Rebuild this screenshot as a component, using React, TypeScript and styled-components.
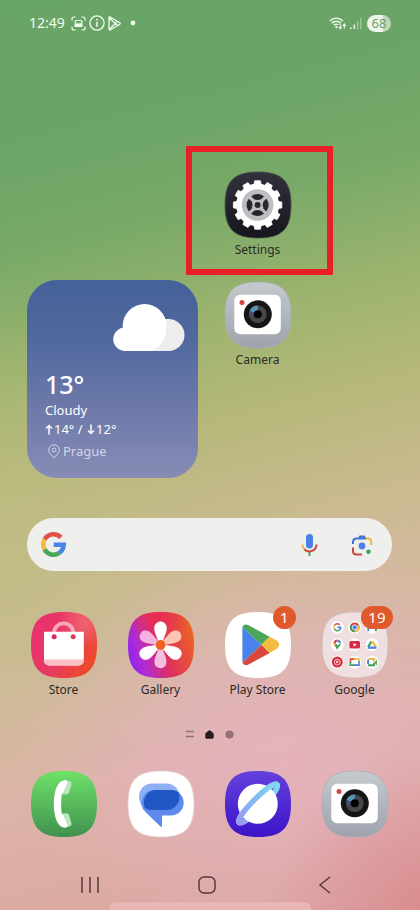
import React from "react";
import styled, { createGlobalStyle } from "styled-components";

const GlobalStyle = createGlobalStyle`
  *, *::before, *::after { box-sizing: border-box; }
  body { margin: 0; font-family: "Noto Sans", Roboto, sans-serif; }
  button, input { font: inherit; color: inherit; background: none; border: 0; padding: 0; margin: 0; }
  button { cursor: pointer; }
  svg { display: block; overflow: visible; }
`;

const Screen = styled.div`
  display: flex;
  flex-direction: column;
  min-height: 100vh;
  overflow: hidden;
  background:
    radial-gradient(ellipse 45% 20% at 108% 102%, rgba(216, 118, 128, 0.65), rgba(216, 118, 128, 0) 100%),
    radial-gradient(ellipse 65% 24% at 68% 84%, rgba(232, 178, 196, 0.75), rgba(232, 178, 196, 0) 100%),
    radial-gradient(ellipse 55% 26% at 0% 62%, rgba(190, 190, 130, 0.65), rgba(190, 190, 130, 0) 100%),
    linear-gradient(166deg, #68a466 0%, #6aa567 14%, #78a968 25%, #9ab36e 36%, #b7b87a 47%, #cbba92 59%, #d7b8a4 70%, #ddb3a8 80%, #d9a39a 100%);
`;

const StatusBar = styled.header`
  display: flex;
  align-items: center;
  justify-content: space-between;
  height: 46px;
  padding: 0 29px;
  color: #f2fbf0;
`;

const StatusGroup = styled.div<{ $gap: number }>`
  display: flex;
  align-items: center;
  gap: ${(p) => p.$gap}px;
`;

const Clock = styled.time`
  font-size: 14px;
  line-height: 20px;
  margin-right: 3px;
`;

const Battery = styled.span`
  display: flex;
  align-items: center;
  justify-content: center;
  width: 24px;
  height: 17px;
  margin-left: 2px;
  border-radius: 9px;
  background: linear-gradient(90deg, #edf6ea 68%, #bcd8b9 68%);
  color: #6ea06b;
  font-size: 13px;
  line-height: 16px;
`;

const Home = styled.main`
  display: flex;
  flex-direction: column;
  flex: 1;
  padding-top: 126px;
`;

const AppGrid = styled.section`
  display: grid;
  grid-template-columns: repeat(4, 1fr);
  grid-auto-rows: 110px;
  padding: 0 17px 0 15px;
`;

const AppRow = styled.section<{ $top: number }>`
  display: grid;
  grid-template-columns: repeat(4, 1fr);
  margin-top: ${(p) => p.$top}px;
  padding: 0 17px 0 15px;
`;

const AppCell = styled.div<{ $column?: number }>`
  position: relative;
  display: flex;
  flex-direction: column;
  align-items: center;
  align-self: start;
  ${(p) => p.$column && `grid-column: ${p.$column};`}
`;

const AppButton = styled.button`
  display: flex;
  flex-direction: column;
  align-items: center;
  gap: 4px;
`;

const IconFrame = styled.span`
  position: relative;
  display: block;
  width: 66px;
  height: 66px;
`;

const AppLabel = styled.span`
  font-size: 12px;
  line-height: 16px;
  color: #2b2a27;
  white-space: nowrap;
`;

const Badge = styled.span`
  position: absolute;
  top: -6px;
  right: -5px;
  min-width: 22px;
  height: 23px;
  padding: 0 7px;
  border-radius: 12px;
  background: #e0592b;
  color: #fff;
  font-size: 15px;
  line-height: 22px;
  text-align: center;
`;

const Highlight = styled.span`
  position: absolute;
  top: -26px;
  left: -23px;
  right: -27px;
  height: 129px;
  border: 6px solid #e81f25;
  pointer-events: none;
`;

const Weather = styled.section`
  grid-column: 1 / span 2;
  grid-row: 2 / span 2;
  align-self: start;
  display: flex;
  flex-direction: column;
  height: 198px;
  margin: -2px 11px 0 12px;
  padding: 24px 13px 0 18px;
  border-radius: 30px;
  background: linear-gradient(180deg, #456199 0%, #51699e 30%, #6b78a9 62%, #878cb5 100%);
  color: #fff;
  font-size: 13px;
  line-height: 19px;

  > svg { align-self: flex-end; }
`;

const Temperature = styled.strong`
  margin-top: 15px;
  font-size: 25px;
  font-weight: 500;
  line-height: 34px;
`;

const Line = styled.span<{ $muted?: boolean }>`
  display: flex;
  align-items: center;
  ${(p) => p.$muted && `
    gap: 3px;
    margin-top: 3px;
    padding-left: 3px;
    color: #d3d5e7;
  `}
`;

const Forecast = styled(Line)`
  gap: 1px;
  white-space: pre;
`;

const SearchBar = styled.form`
  display: flex;
  align-items: center;
  height: 53px;
  margin: 16px 28px 0 27px;
  padding: 0 19px 0 14px;
  border-radius: 27px;
  background: #eff0ee;
`;

const SearchInput = styled.input`
  flex: 1;
  min-width: 0;
  padding: 0 12px;
  font-size: 15px;
  outline: none;
`;

const SearchActions = styled.div`
  display: flex;
  align-items: center;
  gap: 33px;
`;

const Pager = styled.nav`
  display: flex;
  align-items: center;
  justify-content: center;
  gap: 11px;
  height: 20px;
  margin-top: 26px;
`;

const NavBar = styled.nav`
  display: grid;
  grid-template-columns: repeat(3, 1fr);
  align-items: center;
  justify-items: center;
  height: 34px;
  padding: 0 36px 0 31px;
  margin-top: 29px;
`;

const Sheet = styled.div`
  width: 48%;
  height: 8px;
  margin: 0 auto;
  border-radius: 6px 6px 0 0;
  background: #e8b6b6;
  box-shadow: 0 0 1px #c58f93;
`;

const SQUIRCLE = "M33 0C57 0 66 9 66 33S57 66 33 66 0 57 0 33 9 0 33 0Z";

function Tile({ fill, stroke = "none", children }: { fill: string; stroke?: string; children?: React.ReactNode }) {
  return (
    <svg width="66" height="66" viewBox="0 0 66 66" aria-hidden="true">
      <path d={SQUIRCLE} fill={fill} stroke={stroke} strokeWidth="0.8" />
      {children}
    </svg>
  );
}

function Vertical({ id, from, to }: { id: string; from: string; to: string }) {
  return (
    <defs>
      <linearGradient id={id} x1="0" y1="0" x2="0" y2="1">
        <stop stopColor={from} />
        <stop offset="1" stopColor={to} />
      </linearGradient>
    </defs>
  );
}

function SettingsIcon() {
  return (
    <Tile fill="url(#settings-bg)" stroke="#4a5147">
      <Vertical id="settings-bg" from="#32323e" to="#15161d" />
      <g transform="translate(32.6 33)">
        <circle r="21.5" fill="#fff" />
        {Array.from({ length: 12 }, (_, i) => (
          <path key={i} d="M-3.6-20L-2.9-24.2H2.9L3.6-20Z" fill="#fff" stroke="#fff" strokeWidth="0.8" strokeLinejoin="round" transform={`rotate(${i * 30})`} />
        ))}
        <circle r="15.8" fill="#bdbdc2" />
        {[0, 90, 180, 270].map((angle) => (
          <path key={angle} d="M-6.3-8.8Q0-13.4 6.3-8.8Q6-8 3.4-5.8Q0-4.4-3.4-5.8Q-6-8-6.3-8.8Z" fill="#25262f" transform={`rotate(${angle})`} />
        ))}
        <circle r="3" fill="#25262f" />
      </g>
    </Tile>
  );
}

function CameraIcon() {
  return (
    <Tile fill="url(#camera-bg)" stroke="#a9b0b3">
      <Vertical id="camera-bg" from="#c5cacd" to="#9da2ad" />
      <rect x="9.3" y="12.8" width="46.5" height="39.5" rx="6" fill="#fff" />
      <circle cx="17" cy="20.4" r="2.5" fill="#d8433f" />
      <circle cx="32.8" cy="32.3" r="14" fill="#151516" />
      <circle cx="32.8" cy="32.3" r="8.8" fill="#48484c" />
      <path d="M32.8 32.3V23.5A8.8 8.8 0 0 0 24.6 29Z" fill="#5797b4" />
      <path d="M32.8 32.3L24.6 29A8.8 8.8 0 0 0 24.2 34Z" fill="#4b4a78" />
      <circle cx="32.8" cy="32.3" r="4" fill="#020203" />
    </Tile>
  );
}

function StoreIcon() {
  return (
    <Tile fill="url(#store-bg)">
      <defs>
        <linearGradient id="store-bg" x1="0" y1="0.25" x2="1" y2="0.8">
          <stop stopColor="#e9306f" />
          <stop offset="0.5" stopColor="#e63c60" />
          <stop offset="1" stopColor="#ee4b22" />
        </linearGradient>
        <radialGradient id="store-glow" cx="0.82" cy="0.15" r="0.4">
          <stop stopColor="#f27078" stopOpacity="0.8" />
          <stop offset="1" stopColor="#f27078" stopOpacity="0" />
        </radialGradient>
      </defs>
      <path d={SQUIRCLE} fill="url(#store-glow)" />
      <path d="M23 21A9.7 9.7 0 0 1 42.4 21" fill="none" stroke="#fba5bb" strokeWidth="3.8" />
      <path d="M13 19.8H52.8V48Q52.8 53.4 47.4 53.4H18.4Q13 53.4 13 48Z" fill="#fff" />
      <path d="M13 47.4H52.8V48Q52.8 53.4 47.4 53.4H18.4Q13 53.4 13 48Z" fill="#fac0c4" />
      <circle cx="23.2" cy="24.8" r="2.5" fill="#d72b61" />
      <circle cx="42.2" cy="24.8" r="2.5" fill="#df3b56" />
    </Tile>
  );
}

function GalleryIcon() {
  return (
    <Tile fill="url(#gallery-bg)">
      <defs>
        <linearGradient id="gallery-bg" x1="0" y1="0.65" x2="1" y2="0.35">
          <stop stopColor="#9024f0" />
          <stop offset="0.2" stopColor="#b52ccb" />
          <stop offset="0.5" stopColor="#dd2e62" />
          <stop offset="1" stopColor="#ec6423" />
        </linearGradient>
        <radialGradient id="gallery-top" cx="0.45" cy="0" r="0.5">
          <stop stopColor="#ea2d50" />
          <stop offset="1" stopColor="#ea2d50" stopOpacity="0" />
        </radialGradient>
      </defs>
      <path d={SQUIRCLE} fill="url(#gallery-top)" />
      <g transform="translate(32.5 33)">
        {[60, 180, 300, 0, 120, 240].map((angle, i) => (
          <path
            key={angle}
            d="M-2.2-3.8C-3-8-6-12-6-17.2A6 6 0 0 1 6-17.2C6-12 3-8 2.2-3.8L0 0Z"
            fill={i > 2 ? "#fff" : ["#fcc4b4", "#f3bfe0", "#f5b3e0"][i]}
            stroke={i > 2 ? "#fff" : "none"}
            strokeWidth="0.6"
            transform={`rotate(${angle})`}
          />
        ))}
        <circle r="4.9" fill="#ed6420" />
      </g>
    </Tile>
  );
}

function PlayIcon() {
  return (
    <Tile fill="#fff">
      <path d="M17.4 15V50.5L36.5 32.8Z" fill="#4a82ec" />
      <path d="M17.4 15Q18.8 11.7 23 12.9L44.7 24.7L36.5 32.8 17.4 15Z" fill="#4ba657" />
      <path d="M17.4 50.5Q18.8 54.2 23 52.7L44.7 41L36.5 32.8Z" fill="#d9483d" />
      <path d="M44.7 24.7L52 28.8Q56.3 32.8 52 36.8L44.7 41 36.5 32.8Z" fill="#f2bd42" />
    </Tile>
  );
}

function GoogleMark({ size }: { size: number }) {
  return (
    <svg width={size} height={size} viewBox="0 0 24 24" aria-hidden="true">
      <g fill="none" strokeWidth="4.4">
        <path d="M19.2 5.2A9.8 9.8 0 0 0 3.5 7.1" stroke="#df5247" />
        <path d="M3.5 7.1A9.8 9.8 0 0 0 3.4 16.7" stroke="#f2b83c" />
        <path d="M3.4 16.7A9.8 9.8 0 0 0 17.6 20" stroke="#47a75a" />
        <path d="M17.6 20A9.8 9.8 0 0 0 21.8 12.2H12.2" stroke="#4a84e8" />
      </g>
    </svg>
  );
}

function FolderIcon() {
  const spots = [15.3, 32.7, 50.1];
  return (
    <Tile fill="#efdfe1" stroke="#cbb6b6">
      {spots.map((y) => spots.map((x) => <circle key={`${x}-${y}`} cx={x} cy={y} r="6.4" fill="#fff" />))}
      <g transform="translate(11.1 11.1) scale(0.35)">
        <GoogleMark size={24} />
      </g>
      <g transform="translate(32.7 15.3)">
        <circle r="4.9" fill="#dc4538" />
        <path d="M0 0L-4.3-2.3A4.9 4.9 0 0 0 .2 4.9Z" fill="#3f9d56" />
        <path d="M0 0L.2 4.9A4.9 4.9 0 0 0 4.3-2.3Z" fill="#f0bb3c" />
        <circle r="2.5" fill="#4a83e8" stroke="#fff" strokeWidth="0.8" />
      </g>
      <g transform="translate(50.1 15.3)" fill="none" strokeWidth="1.9">
        <path d="M-3.8 3.9V-2.8" stroke="#4a83e8" />
        <path d="M-4-2.8L0 .6L4-2.8" stroke="#dc4538" />
        <path d="M3.8 3.9V-2.8" stroke="#3f9d56" />
      </g>
      <g transform="translate(32.7 32.7)">
        <rect x="-5.4" y="-3.8" width="10.8" height="7.6" rx="1.8" fill="#dc2740" />
        <path d="M-1.2-1.8L2 0-1.2 1.8Z" fill="#fff" />
      </g>
      <g transform="translate(15.3 32.7)">
        <path d="M0 5.2C-.5 2.5-3.6 1.5-3.6-1.6L0-1.6Z" fill="#3f9d56" />
        <path d="M0 5.2C.5 2.5 3.6 1.5 3.6-1.6L-1.5 2.4Z" fill="#3f9d56" />
        <path d="M-3.6-1.6A3.6 3.6 0 0 1 0-5.2L0-1.6-2.8.8Z" fill="#dc4538" />
        <path d="M0-5.2A3.6 3.6 0 0 1 3.6-1.6L0-1.6Z" fill="#4a83e8" />
        <path d="M-3.5-1.2L-2.4 1.4 0-1.6Z" fill="#f0bb3c" />
        <circle cy="-1.6" r="1.4" fill="#fff" />
      </g>
      <g transform="translate(50.1 32.7)" fill="none" strokeWidth="2.3">
        <path d="M-.8-3.2L-4 2.6" stroke="#3f9d56" />
        <path d="M.2-3.4L3.8 2.4" stroke="#f0bb3c" />
        <path d="M-4 3H4.4" stroke="#4a83e8" />
      </g>
      <g transform="translate(15.3 50.1)">
        <circle r="5.5" fill="#d92b3f" />
        <circle r="2.9" fill="none" stroke="#fff" strokeWidth="0.7" />
        <path d="M-.9-1.5L1.7 0-.9 1.5Z" fill="#fff" />
      </g>
      <g transform="translate(32.7 50.1)" fill="none" strokeWidth="1.6">
        <path d="M-4.3 1V-3H1" stroke="#dc4538" />
        <path d="M-1-3H4.3V0" stroke="#f0bb3c" />
        <path d="M4.3-1V3H-1" stroke="#4a83e8" />
        <path d="M0 3H-4.3V0" stroke="#3f9d56" />
      </g>
      <g transform="translate(50.1 50.1)" fill="none" strokeWidth="2">
        <path d="M-4 2V-2.6" stroke="#4a83e8" />
        <path d="M-3.6-3H2V-.6" stroke="#f0bb3c" />
        <path d="M-4 3.2H2V.6" stroke="#3f9d56" />
        <path d="M2.4 .4L4.8-2.8V3.4Z" fill="#3f9d56" stroke="none" />
      </g>
    </Tile>
  );
}

function PhoneIcon() {
  return (
    <Tile fill="url(#phone-bg)">
      <Vertical id="phone-bg" from="#6fe168" to="#3f914f" />
      <path d="M33 9.2L39 10.3Q41 11 40.4 13.4L38 21.6Q37.4 23.6 35 23.4L30 23Z" fill="#bce6bd" />
      <path d="M33 56.4L39 55.3Q41 54.6 40.4 52.2L38 44Q37.4 42 35 42.2L30 42.8Z" fill="#bce6bd" />
      <path d="M34 9.2C27 9.2 22.8 19 22.8 33S27 56.6 34 56.6Q37.5 56.6 36.2 53.5L32.4 44.5Q31.8 42.6 30.8 42.8C30 38.5 30 27.5 30.8 23Q31.8 23.2 32.4 21L36.2 12.3Q37.5 9.2 34 9.2Z" fill="#fff" />
    </Tile>
  );
}

function MessagesIcon() {
  return (
    <Tile fill="#fff" stroke="#e5ccd2">
      <defs>
        <clipPath id="back-bubble">
          <rect x="11" y="12.5" width="40.5" height="26.5" rx="13" />
        </clipPath>
      </defs>
      <rect x="11" y="12.5" width="40.5" height="26.5" rx="13" fill="#8eaff3" />
      <path d="M27 19H43A12.7 12.7 0 0 1 43 44.4H34V54.5Q34 56.5 32.2 55.2L17.5 41A12.8 12.8 0 0 1 27 19Z" fill="#5e8af0" />
      <path d="M27 19H43A12.7 12.7 0 0 1 43 44.4H27A12.8 12.8 0 0 1 27 19Z" fill="#2157c5" clipPath="url(#back-bubble)" />
    </Tile>
  );
}

function InternetIcon() {
  return (
    <Tile fill="url(#internet-bg)">
      <Vertical id="internet-bg" from="#6341dc" to="#3c14c9" />
      <defs>
        <linearGradient id="ring" gradientUnits="userSpaceOnUse" x1="-28" y1="0" x2="28" y2="0">
          <stop stopColor="#9a9bf4" />
          <stop offset="0.4" stopColor="#83b4f2" />
          <stop offset="1" stopColor="#80dcef" />
        </linearGradient>
      </defs>
      <g transform="translate(33 32.6) rotate(-45)">
        <ellipse rx="26.8" ry="5.2" fill="#4327bd" stroke="url(#ring)" strokeWidth="5.5" />
      </g>
      <circle cx="32.8" cy="32.8" r="20" fill="#fff" />
      <g transform="translate(33 32.6) rotate(-45)" fill="none">
        <path d="M-26.8 0C-26.8-7 26.8-7 26.8 0" stroke="url(#ring)" strokeWidth="5.5" strokeLinecap="round" />
      </g>
    </Tile>
  );
}

function CloudIcon() {
  return (
    <svg width="72" height="48" viewBox="0 0 72 48" role="img" aria-label="Cloudy">
      <path d="M40 15H55.5A16 16 0 0 1 55.5 47H36Z" fill="#ededee" />
      <g fill="#fff">
        <circle cx="12" cy="35.3" r="11.7" />
        <circle cx="31.6" cy="22" r="21.9" />
        <path d="M12 47V26H53.1C52.5 36 47 43.5 39 47Z" />
      </g>
    </svg>
  );
}

function PinIcon() {
  return (
    <svg width="12" height="15" viewBox="0 0 12 15" fill="none" stroke="currentColor" aria-hidden="true">
      <path d="M6 14L2.1 9.7A5.3 5.3 0 1 1 9.9 9.7Z" strokeLinejoin="round" />
      <circle cx="6" cy="6" r="2" />
    </svg>
  );
}

function ArrowIcon({ down }: { down?: boolean }) {
  return (
    <svg width="8" height="11" viewBox="0 0 8 11" fill="none" stroke="currentColor" strokeWidth="1.5" aria-hidden="true">
      <path d={down ? "M4 .5V9.5M1 6.5L4 9.5 7 6.5" : "M4 10.5V1.5M1 4.5L4 1.5 7 4.5"} />
    </svg>
  );
}

function MicIcon() {
  return (
    <svg width="17" height="24" viewBox="0 0 17 24" fill="none" aria-hidden="true">
      <rect x="5" y="1" width="7" height="14.5" rx="3.5" fill="#4a82e8" />
      <path d="M1.5 11.5A7 7 0 0 0 3.4 16.2" stroke="#f0b83c" strokeWidth="2" />
      <path d="M3.4 16.2A7 7 0 0 0 15.5 11.5" stroke="#c9473b" strokeWidth="2" />
      <path d="M8.5 19V23" stroke="#47a156" strokeWidth="2" />
    </svg>
  );
}

function LensIcon() {
  return (
    <svg width="22" height="22" viewBox="0 0 22 22" fill="none" strokeWidth="2" aria-hidden="true">
      <path d="M2 10V8Q2 4.5 5.5 4.5H15" stroke="#4176d5" />
      <path d="M7 4L8.5 1.5H13.5L15 4Z" fill="#4176d5" />
      <path d="M15 4.5H16.5Q20.3 4.5 20.3 8V11" stroke="#f0b83c" />
      <path d="M2 13.5V17Q2 20.5 5.5 20.5H11" stroke="#c9473b" />
      <circle cx="11" cy="12" r="3.4" fill="#4a82e8" />
      <circle cx="17.5" cy="17.8" r="2.3" fill="#47a156" />
    </svg>
  );
}

function CaptureIcon() {
  return (
    <svg width="15" height="15" viewBox="0 0 15 15" fill="none" stroke="currentColor" strokeWidth="1.2" aria-label="Screenshot saved" role="img">
      <path d="M1 4.5V3Q1 1 3 1H4.5M10.5 1H12Q14 1 14 3V4.5M14 10.5V12Q14 14 12 14H10.5M4.5 14H3Q1 14 1 12V10.5" />
      <rect x="4.2" y="4.5" width="6.6" height="6" rx="1" />
      <path d="M4.2 9.2L6.4 7.6 7.8 8.7 9 7.6 10.8 9V10.5H4.2Z" fill="currentColor" />
    </svg>
  );
}

function InfoIcon() {
  return (
    <svg width="16" height="16" viewBox="0 0 16 16" fill="none" stroke="currentColor" strokeWidth="1.3" aria-label="Information" role="img">
      <circle cx="8" cy="8" r="7.1" />
      <path d="M8 7V11.7" strokeWidth="1.5" />
      <circle cx="8" cy="4.7" r="0.9" fill="currentColor" stroke="none" />
    </svg>
  );
}

function PlayOutlineIcon() {
  return (
    <svg width="13" height="15" viewBox="0 0 13 15" fill="none" stroke="currentColor" strokeWidth="1.3" strokeLinejoin="round" aria-label="Play Store" role="img">
      <path d="M1 1.5V13.5Q1.4 14.4 2.6 13.8L11.8 8.3Q12.6 7.5 11.8 6.7L2.6 1.2Q1.4 .6 1 1.5ZM1.3 1.7L9.4 9.5M1.3 13.3L9.4 5.5" />
    </svg>
  );
}

function WifiIcon() {
  return (
    <svg width="18" height="14" viewBox="0 0 18 14" fill="none" stroke="currentColor" strokeWidth="1.3" aria-label="Wi-Fi" role="img">
      <path d="M.8 5A9.2 9.2 0 0 1 14 5M2.8 7.2A6.4 6.4 0 0 1 12 7.2M4.8 9.3A3.6 3.6 0 0 1 9.4 8.8" />
      <path d="M5.8 10.8L7.4 12.5 9 10.8A2.3 2.3 0 0 0 5.8 10.8Z" fill="currentColor" stroke="none" />
      <path d="M11.3 8V12.5M9.9 11L11.3 12.7 12.7 11M15.3 12.5V8.3M13.9 9.8L15.3 8 16.7 9.8" strokeWidth="1.1" />
    </svg>
  );
}

function SignalIcon() {
  return (
    <svg width="12" height="12" viewBox="0 0 12 12" stroke="currentColor" strokeWidth="1.3" aria-label="Mobile signal" role="img">
      <path d="M1 12V10.3M4.3 12V7.6" />
      <path d="M7.6 12V4.3M10.8 12V1" opacity="0.45" />
    </svg>
  );
}

interface AppProps {
  name: string;
  icon: React.ReactNode;
  column?: number;
  badge?: number;
  hideLabel?: boolean;
  highlighted?: boolean;
}

function AppShortcut({ name, icon, column, badge, hideLabel, highlighted }: AppProps) {
  return (
    <AppCell $column={column}>
      <AppButton type="button" aria-label={hideLabel ? name : undefined}>
        <IconFrame>
          {icon}
          {badge !== undefined && <Badge>{badge}</Badge>}
        </IconFrame>
        {!hideLabel && <AppLabel>{name}</AppLabel>}
      </AppButton>
      {highlighted && <Highlight />}
    </AppCell>
  );
}

export default function App() {
  return (
    <Screen>
      <GlobalStyle />
      <StatusBar>
        <StatusGroup $gap={3}>
          <Clock>12:49</Clock>
          <CaptureIcon />
          <InfoIcon />
          <StatusGroup $gap={9}>
            <PlayOutlineIcon />
            <svg width="6" height="6" viewBox="0 0 6 6" aria-hidden="true">
              <circle cx="3" cy="3" r="2.4" fill="currentColor" />
            </svg>
          </StatusGroup>
        </StatusGroup>
        <StatusGroup $gap={3}>
          <WifiIcon />
          <SignalIcon />
          <Battery>68</Battery>
        </StatusGroup>
      </StatusBar>

      <Home>
        <AppGrid>
          <AppShortcut name="Settings" icon={<SettingsIcon />} column={3} highlighted />
          <Weather>
            <CloudIcon />
            <Temperature>13°</Temperature>
            <Line>Cloudy</Line>
            <Forecast><ArrowIcon />14° / <ArrowIcon down />12°</Forecast>
            <Line $muted><PinIcon />Prague</Line>
          </Weather>
          <AppShortcut name="Camera" icon={<CameraIcon />} column={3} />
        </AppGrid>

        <SearchBar role="search" onSubmit={(e) => e.preventDefault()}>
          <GoogleMark size={25} />
          <SearchInput type="text" aria-label="Search" />
          <SearchActions>
            <button type="button" aria-label="Voice search"><MicIcon /></button>
            <button type="button" aria-label="Search with camera"><LensIcon /></button>
          </SearchActions>
        </SearchBar>

        <AppRow $top={41}>
          <AppShortcut name="Store" icon={<StoreIcon />} />
          <AppShortcut name="Gallery" icon={<GalleryIcon />} />
          <AppShortcut name="Play Store" icon={<PlayIcon />} badge={1} />
          <AppShortcut name="Google" icon={<FolderIcon />} badge={19} />
        </AppRow>

        <Pager aria-label="Home pages">
          <button type="button" aria-label="Feed">
            <svg width="8" height="8" viewBox="0 0 8 8" stroke="#957178" strokeWidth="1.3"><path d="M0 1.5H8M0 6.5H8" /></svg>
          </button>
          <button type="button" aria-label="Main page">
            <svg width="9" height="9" viewBox="0 0 9 9" fill="#241d20"><path d="M3.5.7Q4.5 0 5.5.7L8 2.8Q8.7 3.4 8.7 4.2V7.3Q8.7 8.7 7.3 8.7H1.7Q.3 8.7.3 7.3V4.2Q.3 3.4 1 2.8Z" /></svg>
          </button>
          <button type="button" aria-label="Page 2">
            <svg width="9" height="9" viewBox="0 0 9 9"><circle cx="4.5" cy="4.5" r="4.1" fill="#957178" /></svg>
          </button>
        </Pager>

        <AppRow $top={27}>
          <AppShortcut name="Phone" icon={<PhoneIcon />} hideLabel />
          <AppShortcut name="Messages" icon={<MessagesIcon />} hideLabel />
          <AppShortcut name="Internet" icon={<InternetIcon />} hideLabel />
          <AppShortcut name="Camera" icon={<CameraIcon />} hideLabel />
        </AppRow>
      </Home>

      <NavBar aria-label="System navigation">
        <button type="button" aria-label="Recent apps">
          <svg width="18" height="18" viewBox="0 0 18 18" stroke="#553a40" strokeWidth="1.5"><path d="M1 1V17M9 1V17M17 1V17" /></svg>
        </button>
        <button type="button" aria-label="Home">
          <svg width="18" height="18" viewBox="0 0 18 18" fill="none" stroke="#553a40" strokeWidth="1.5"><rect x="1" y="1" width="16" height="16" rx="5" /></svg>
        </button>
        <button type="button" aria-label="Back">
          <svg width="12" height="18" viewBox="0 0 12 18" fill="none" stroke="#553a40" strokeWidth="1.5"><path d="M11 1L1 9 11 17" /></svg>
        </button>
      </NavBar>
      <Sheet />
    </Screen>
  );
}
